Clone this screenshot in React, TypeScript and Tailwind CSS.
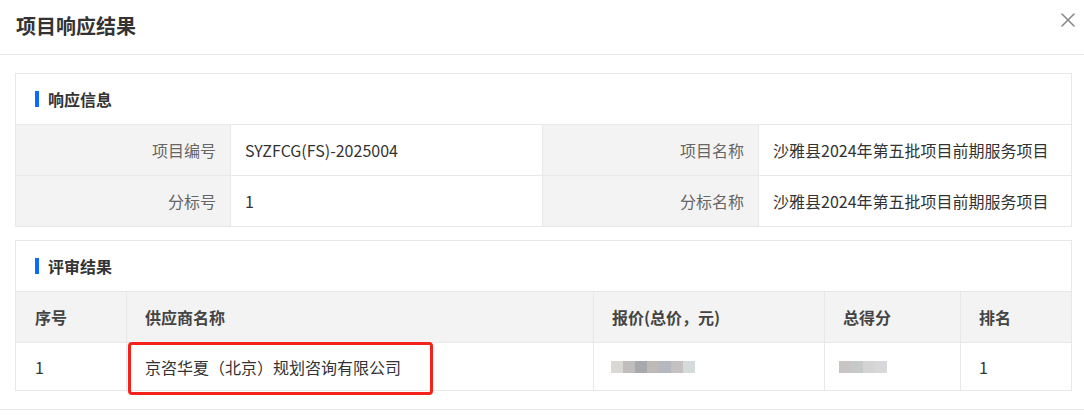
import React from 'react';
import { X } from 'lucide-react';

const font = { fontFamily: '"Noto Sans CJK SC", "Liberation Sans", sans-serif' };

function SectionTitle({ title }: { title: string }) {
  return (
    <div className="h-[51px] flex items-center pl-[19px] border-b border-[#e8e8e8]">
      <span className="w-[4px] h-[16px] bg-[#0a6cff] mr-[9px]" />
      <span className="text-[16px] font-bold text-[#333]">{title}</span>
    </div>
  );
}

function InfoRow({ cells, last }: { cells: [string, string, string, string]; last?: boolean }) {
  return (
    <div className={`grid grid-cols-[215px_312px_216px_1fr] ${last ? 'h-[50px]' : 'h-[51px] border-b border-[#e8e8e8]'}`}>
      <div className="bg-[#f3f3f3] flex items-center justify-end pr-[14px] text-[#666] border-r border-[#e8e8e8]">{cells[0]}</div>
      <div className="flex items-center pl-[14px] text-[#333] border-r border-[#e8e8e8]">{cells[1]}</div>
      <div className="bg-[#f3f3f3] flex items-center justify-end pr-[14px] text-[#666] border-r border-[#e8e8e8]">{cells[2]}</div>
      <div className="flex items-center pl-[14px] text-[#333]">{cells[3]}</div>
    </div>
  );
}

const priceBlur = ['#d9d8d5', '#c0bdbc', '#a8a9ad', '#bfb9b7', '#b5b8be', '#c5c1c3', '#d5dadb'];
const scoreBlur = ['#c9c5c5', '#c5cac9', '#d4d4d5', '#d8d8da'];

function Blur({ colors }: { colors: string[] }) {
  return (
    <div className="flex h-[12px]">
      {colors.map((c, i) => (
        <span key={i} className="w-[12px] h-[12px]" style={{ backgroundColor: c }} />
      ))}
    </div>
  );
}

const cols = 'grid grid-cols-[111px_467px_231px_136px_1fr]';

export default function App() {
  return (
    <div className="w-[1084px] h-[419px] bg-white relative overflow-hidden text-[16px]" style={font}>
      <div className="h-[55px] border-b border-[#ebebeb] flex items-center pl-[16px]">
        <h1 className="text-[20px] font-bold text-[#333] -mt-[2px]">项目响应结果</h1>
      </div>
      <button className="absolute top-[8px] right-[4px] text-[#888]">
        <X size={24} strokeWidth={1.6} />
      </button>

      <div className="pl-[15px] pr-[12px] pt-[18px] pb-[18px] border-b border-[#ebebeb]">
        <div className="border border-[#e8e8e8]">
          <SectionTitle title="响应信息" />
          <InfoRow cells={['项目编号', 'SYZFCG(FS)-2025004', '项目名称', '沙雅县2024年第五批项目前期服务项目']} />
          <InfoRow cells={['分标号', '1', '分标名称', '沙雅县2024年第五批项目前期服务项目']} last />
        </div>

        <div className="border border-[#e8e8e8] mt-[13px]">
          <SectionTitle title="评审结果" />
          <div className={`${cols} h-[51px] bg-[#f3f3f3] border-b border-[#e8e8e8] font-bold text-[#444]`}>
            <div className="flex items-center pl-[19px] border-r border-[#e8e8e8]">序号</div>
            <div className="flex items-center pl-[18px] border-r border-[#e8e8e8]">供应商名称</div>
            <div className="flex items-center pl-[18px] border-r border-[#e8e8e8]">报价(总价，元)</div>
            <div className="flex items-center pl-[18px] border-r border-[#e8e8e8]">总得分</div>
            <div className="flex items-center pl-[18px]">排名</div>
          </div>
          <div className={`${cols} h-[47px] text-[#333] relative`}>
            <div className="flex items-center pl-[19px] border-r border-[#e8e8e8]">1</div>
            <div className="flex items-center pl-[18px] border-r border-[#e8e8e8]">京咨华夏（北京）规划咨询有限公司</div>
            <div className="flex items-center pl-[17px] border-r border-[#e8e8e8]">
              <Blur colors={priceBlur} />
            </div>
            <div className="flex items-center pl-[14px] border-r border-[#e8e8e8]">
              <Blur colors={scoreBlur} />
            </div>
            <div className="flex items-center pl-[18px]">1</div>
            <div className="absolute left-[112px] -top-[1px] w-[305px] h-[53px] border-[3px] border-[#f5211b] rounded-[4px]" />
          </div>
        </div>
      </div>
    </div>
  );
}
